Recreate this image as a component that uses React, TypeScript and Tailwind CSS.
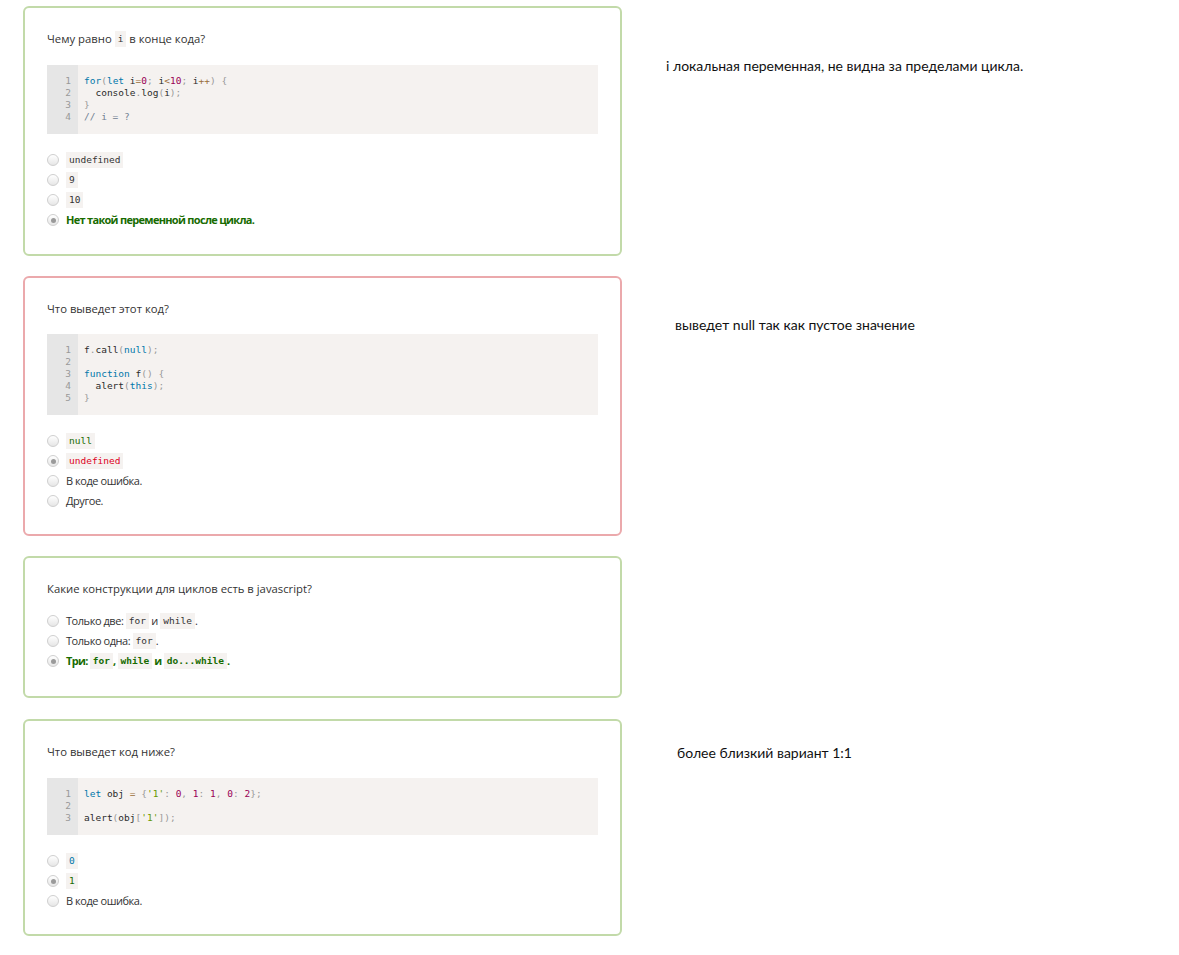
import React from "react";

type Tok = [string, string?];

const colorOf: Record<string, string> = {
  k: "text-[#0077aa]",
  n: "text-[#990055]",
  p: "text-[#999999]",
  o: "text-[#9a6e3a]",
  s: "text-[#669900]",
  c: "text-[#708090]",
};

function CodeBlock({ lines, mt = "mt-[17px]" }: { lines: Tok[][]; mt?: string }) {
  return (
    <div className={`flex bg-[#f5f2f0] ${mt} font-['DejaVu_Sans_Mono',monospace] text-[9.5px] leading-[12px]`}>
      <div className="w-[31px] bg-[#e6e6e6] pt-[10px] pb-[11px] pr-[7px] text-right text-[#999999]">
        {lines.map((_, i) => (
          <div key={i} className="h-[12px]">
            {i + 1}
          </div>
        ))}
      </div>
      <div className="pt-[10px] pb-[11px] pl-[6px] text-[#2a2a2a] whitespace-pre">
        {lines.map((l, i) => (
          <div key={i} className="h-[12px]">
            {l.map((t, j) => (
              <span key={j} className={t[1] ? colorOf[t[1]] : ""}>
                {t[0]}
              </span>
            ))}
          </div>
        ))}
      </div>
    </div>
  );
}

function C({ children, cls = "" }: { children: React.ReactNode; cls?: string }) {
  return (
    <code
      className={`inline-block bg-[#f5f2f0] px-[3px] leading-[16px] tracking-normal font-['DejaVu_Sans_Mono',monospace] text-[9.5px] ${cls}`}
    >
      {children}
    </code>
  );
}

function Radio({ checked }: { checked?: boolean }) {
  return (
    <span className="w-[12px] h-[12px] rounded-full border border-[#cfcfcf] bg-gradient-to-b from-[#ffffff] to-[#e6e6e6] flex items-center justify-center shrink-0">
      {checked && <span className="w-[5px] h-[5px] rounded-full bg-[#9a9a9a]" />}
    </span>
  );
}

function Option({ checked, children, cls = "tracking-[-0.45px]" }: { checked?: boolean; children: React.ReactNode; cls?: string }) {
  return (
    <div className={`h-[20px] flex items-center text-[11px] ${cls}`}>
      <Radio checked={checked} />
      <span className="ml-[7px] flex items-center">{children}</span>
    </div>
  );
}

function Card({
  border,
  question,
  code,
  codeMt,
  pb = "pb-[24px]",
  children,
}: {
  border: string;
  question: React.ReactNode;
  code?: Tok[][];
  codeMt?: string;
  pb?: string;
  children: React.ReactNode;
}) {
  return (
    <div className={`w-[599px] shrink-0 bg-white border-2 rounded-[6px] px-[22px] pt-[22px] ${pb} ${border}`}>
      <div className="h-[18px] leading-[18px] flex items-center text-[11.3px] text-[#333333]">{question}</div>
      {code && <CodeBlock lines={code} mt={codeMt} />}
      <div className={code ? "mt-[16px]" : "mt-[13px]"}>{children}</div>
    </div>
  );
}

function Note({ children, cls }: { children: React.ReactNode; cls: string }) {
  return (
    <div className={`font-['Lato',sans-serif] text-[14px] leading-[20px] text-[#111111] whitespace-nowrap ${cls}`}>
      {children}
    </div>
  );
}

const G = "font-bold text-[#176b00] tracking-[-0.7px]";

export default function App() {
  return (
    <div className="min-h-[955px] bg-white pt-[6px] pl-[23px] font-['Open_Sans',sans-serif] text-[12px] text-[#333333] flex flex-col">
      <div className="flex items-start">
        <Card
          border="border-[#c2daa9]"
          question={
            <>
              Чему равно&nbsp;<C>i</C>&nbsp;в конце кода?
            </>
          }
          code={[
            [["for", "k"], ["(", "p"], ["let", "k"], [" i"], ["=", "o"], ["0", "n"], [";", "p"], [" i"], ["<", "o"], ["10", "n"], [";", "p"], [" i"], ["++", "o"], [")", "p"], [" "], ["{", "p"]],
            [["  console"], [".", "p"], ["log"], ["(", "p"], ["i"], [")", "p"], [";", "p"]],
            [["}", "p"]],
            [["// i = ?", "c"]],
          ]}
        >
          <Option><C>undefined</C></Option>
          <Option><C>9</C></Option>
          <Option><C>10</C></Option>
          <Option checked cls={G}>Нет такой переменной после цикла.</Option>
        </Card>
        <Note cls="mt-[50px] ml-[44px]">і локальная переменная, не видна за пределами цикла.</Note>
      </div>

      <div className="flex items-start mt-[20px]">
        <Card
          border="border-[#eba9ac]"
          question="Что выведет этот код?"
          codeMt="mt-[16px]"
          pb="pb-[23px]"
          code={[
            [["f"], [".", "p"], ["call"], ["(", "p"], ["null", "k"], [")", "p"], [";", "p"]],
            [[""]],
            [["function", "k"], [" f"], ["(", "p"], [")", "p"], [" "], ["{", "p"]],
            [["  alert"], ["(", "p"], ["this", "k"], [")", "p"], [";", "p"]],
            [["}", "p"]],
          ]}
        >
          <Option><C cls="text-[#176b00]">null</C></Option>
          <Option checked><C cls="text-[#dd0022]">undefined</C></Option>
          <Option>В коде ошибка.</Option>
          <Option>Другое.</Option>
        </Card>
        <Note cls="mt-[39px] ml-[53px]">выведет null так как пустое значение</Note>
      </div>

      <div className="flex items-start mt-[20px]">
        <Card border="border-[#c2daa9]" pb="pb-[25px]" question="Какие конструкции для циклов есть в javascript?">
          <Option>
            Только две:&nbsp;<C>for</C>&nbsp;и&nbsp;<C>while</C>.
          </Option>
          <Option>
            Только одна:&nbsp;<C>for</C>.
          </Option>
          <Option checked cls={G}>
            Три:&nbsp;<C>for</C>,&nbsp;<C>while</C>&nbsp;и&nbsp;<C>do...while</C>.
          </Option>
        </Card>
      </div>

      <div className="flex items-start mt-[21px]">
        <Card
          border="border-[#c2daa9]"
          question="Что выведет код ниже?"
          pb="pb-[23px]"
          code={[
            [["let", "k"], [" obj "], ["=", "o"], [" "], ["{", "p"], ["'1'", "s"], [":", "p"], [" "], ["0", "n"], [",", "p"], [" "], ["1", "n"], [":", "p"], [" "], ["1", "n"], [",", "p"], [" "], ["0", "n"], [":", "p"], [" "], ["2", "n"], ["}", "p"], [";", "p"]],
            [[""]],
            [["alert"], ["(", "p"], ["obj"], ["[", "p"], ["'1'", "s"], ["]", "p"], [")", "p"], [";", "p"]],
          ]}
        >
          <Option><C cls="text-[#0077aa]">0</C></Option>
          <Option checked><C cls="text-[#176b00]">1</C></Option>
          <Option>В коде ошибка.</Option>
        </Card>
        <Note cls="mt-[24px] ml-[55px]">более близкий вариант 1:1</Note>
      </div>
    </div>
  );
}
